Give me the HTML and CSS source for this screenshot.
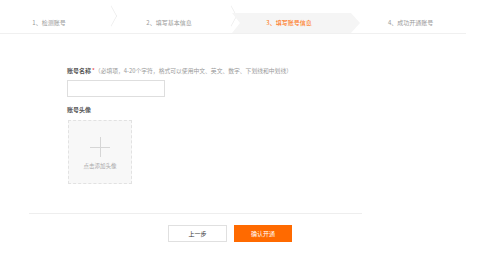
FILE: index.html
```html
<!DOCTYPE html>
<html lang="zh-CN">
<head>
<meta charset="utf-8">
<title>填写账号信息</title>
<link rel="stylesheet" href="styles.css">
</head>
<body>
<div class="steps">
  <div class="step">1、检测账号</div>
  <div class="step">2、填写基本信息</div>
  <div class="step active">3、填写账号信息</div>
  <div class="step last">4、成功开通账号</div>
</div>

<div class="form">
  <div class="field-label"><b>账号名称</b><span class="req">*</span><span class="hint">（必填项，4-20个字符，格式可以使用中文、英文、数字、下划线和中划线）</span></div>
  <div class="input"></div>

  <div class="field-label avatar-label"><b>账号头像</b></div>
  <div class="upload">
    <div class="plus"></div>
    <div class="upload-text">点击添加头像</div>
  </div>
</div>

<div class="divider"></div>

<div class="actions">
  <div class="btn btn-prev">上一步</div>
  <div class="btn btn-ok">确认开通</div>
</div>
</body>
</html>
```

FILE: styles.css
```css
* { box-sizing: border-box; }
html, body { margin: 0; padding: 0; background: #fff; }
body {
  font-family: "Noto Sans CJK SC", "Liberation Sans", sans-serif;
  font-size: 6px;
  color: #666;
  width: 480px;
  height: 256px;
  overflow: hidden;
}

.steps {
  margin-top: 13px;
  width: 466px;
  display: flex;
  border-bottom: 1px solid #f0f0f0;
}
.step {
  position: relative;
  width: 128px;
  height: 20px;
  margin-left: -8px;
  padding: 0 22px 0 8px;
  display: flex;
  align-items: center;
  justify-content: center;
  color: #999;
  line-height: 1;
}
.step:first-child { margin-left: 0; width: 120px; padding-left: 0; }
.step::after {
  content: "";
  position: absolute;
  right: 3px;
  top: 3px;
  width: 14px;
  height: 14px;
  border-top: 1px solid #eaeaea;
  border-right: 1px solid #eaeaea;
  transform: scaleX(0.55) rotate(45deg);
  transform-origin: 100% 0;
}
.step.active {
  color: #ff6a00;
  background: #f5f5f5;
  clip-path: polygon(0 0, calc(100% - 9px) 0, 100% 50%, calc(100% - 9px) 100%, 0 100%, 8px 50%);
}
.step.active::after { display: none; }
.step.last { flex: 1; width: auto; padding-right: 0; justify-content: flex-start; padding-left: 36px; }
.step.last::after { display: none; }

.form {
  padding-left: 67px;
  padding-top: 33px;
}
.field-label {
  height: 8px;
  line-height: 8px;
  white-space: nowrap;
  color: #333;
}
.field-label b { font-weight: bold; color: #555; }
.req { color: #e4393c; margin-left: 1px; }
.hint { color: #999; font-size: 5.8px; }
.input {
  margin-top: 5px;
  width: 98px;
  height: 17px;
  border: 1px solid #dedede;
  background: #fff;
}
.avatar-label { margin-top: 9px; }
.upload {
  margin-top: 6px;
  margin-left: 1px;
  width: 64px;
  height: 64px;
  border: 1px dashed #e2e2e2;
  background: #f8f8f8;
  display: flex;
  flex-direction: column;
  align-items: center;
}
.plus {
  position: relative;
  margin-top: 16px;
  width: 20px;
  height: 20px;
}
.plus::before, .plus::after {
  content: "";
  position: absolute;
  background: #d6d6d6;
}
.plus::before { left: 0; right: 0; top: 9.5px; height: 1px; }
.plus::after { top: 0; bottom: 0; left: 9.5px; width: 1px; }
.upload-text {
  margin-top: 7px;
  font-size: 5.5px;
  color: #aaa;
  line-height: 1;
}

.divider {
  margin: 29px 0 0 29px;
  width: 333px;
  border-top: 1px solid #eee;
}

.actions {
  display: flex;
  gap: 7px;
  padding-left: 168px;
  margin-top: 11px;
}
.btn {
  width: 59px;
  height: 17px;
  display: flex;
  align-items: center;
  justify-content: center;
  line-height: 1;
}
.btn-prev {
  border: 1px solid #e0e0e0;
  color: #333;
  background: #fff;
}
.btn-ok {
  width: 58px;
  background: #ff6a00;
  color: #fff;
}
```
